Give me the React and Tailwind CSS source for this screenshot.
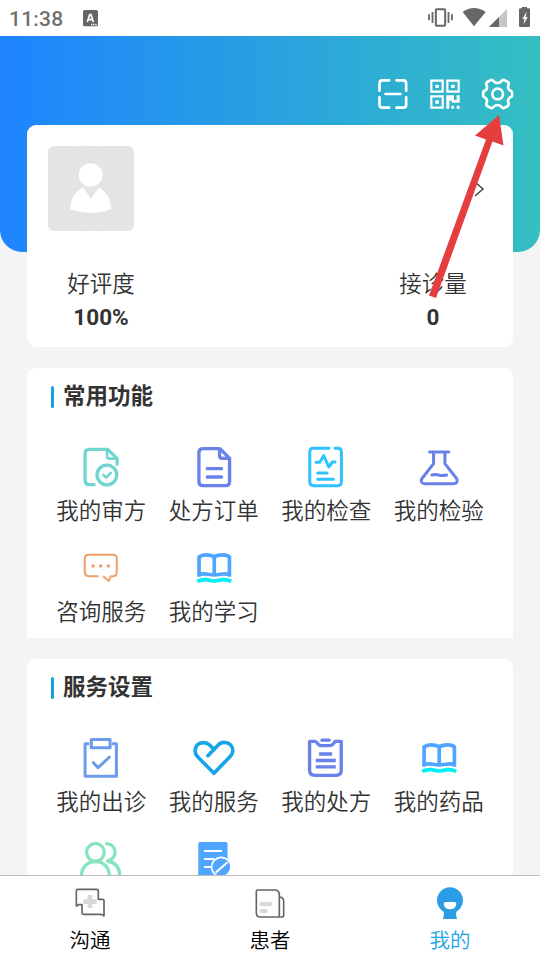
import React from 'react';

const stroke = { fill: 'none', strokeLinecap: 'round', strokeLinejoin: 'round' };

function Icon({ box, children, className = 'h-11 w-11' }) {
  return (
    <svg viewBox={box} className={`${className} block shrink-0`} aria-hidden="true">
      {children}
    </svg>
  );
}

const ReviewIcon = () => (
  <Icon box="117.75 225 132 132">
    <g {...stroke} stroke="#72d5d0" strokeWidth="10">
      <path d="M163 344H149Q136 344 136 331V251Q136 238 149 238H204L232 266V283" />
      <path d="M202 240V259Q202 266 209 266H230" strokeWidth="8" />
      <circle cx="201.500" cy="315" r="29.500" />
      <path d="M191 315L199 323L213 309" strokeWidth="8" />
    </g>
  </Icon>
);

const OrderIcon = () => (
  <Icon box="455.25 225 132 132">
    <g {...stroke} stroke="#6981e8" strokeWidth="10">
      <path d="M488 236H539L568 265V335Q568 347 556 347H488Q476 347 476 335V248Q476 236 488 236Z" />
      <path d="M538 238V257Q538 265 546 265H566M501 296H544M501 321H544" />
    </g>
  </Icon>
);

const ExamIcon = () => (
  <Icon box="102.75 45 132 132">
    <g {...stroke} stroke="#2fc2ff" strokeWidth="9">
      <path d="M178 55H131Q120 55 120 66V156Q120 167 131 167H204Q215 167 215 156V66Q215 55 204 55H196" />
      <path d="M139 97H150L162 77L177 111L188 96H196M144 129H172M144 148H191" />
    </g>
  </Icon>
);

const LabIcon = () => (
  <Icon box="440.25 45 132 132">
    <g {...stroke} stroke="#6981e8" strokeWidth="9">
      <path d="M478 66H536M490 68V101L454 147Q450 161 464 161H549Q564 161 560 147L524 101V68" />
      <path d="M485 135C500 129 509 141 529 135" />
    </g>
  </Icon>
);

const ChatIcon = () => (
  <Icon box="117.75 18 132 132">
    <g {...stroke} stroke="#eea069" strokeWidth="6">
      <path d="M174 109H149Q135 109 135 96V56Q135 44 147 44H219Q231 44 231 56V96Q231 109 219 109H213L207 123L192 110" />
    </g>
    <g fill="#eea069">
      <circle cx="160" cy="78" r="5.500" />
      <circle cx="183" cy="78" r="5.500" />
      <circle cx="206" cy="78" r="5.500" />
    </g>
  </Icon>
);

const BookIcon = () => (
  <Icon box="455.25 18 132 132">
    <g fill="none" strokeWidth="11">
      <path stroke="#4fa5ff" d="M476.500 110V51Q484 44.500 496 44.500Q512 44.500 522 50Q532 44.500 548 44.500Q562 44.500 567.500 51V110M522 50V106M473 105Q484 101 496 102Q508 104 522 105Q536 104 548 102Q560 101 571 105" />
      <path stroke="#00eff2" d="M471 124Q484 118 497 119Q508 121 522 123Q536 121 547 119Q560 118 573 124" />
    </g>
  </Icon>
);

const VisitIcon = () => (
  <Icon box="117.750 33 132 132">
    <g fill="none" stroke="#6c9bec" strokeWidth="9" strokeLinejoin="round">
      <path d="M148 56H136V154H230V56H217" />
      <path d="M154.500 43.500H211V68H154.500Z" />
      <path strokeLinecap="round" d="M161 113L175 128L209 96" />
    </g>
  </Icon>
);

const HeartIcon = () => (
  <Icon box="455.25 33 132 132">
    <path {...stroke} stroke="#18a5e8" strokeWidth="11" d="M503 92L533 61C544 49 563 50 572 61C580 71 579 84 571 93L521 145L472 95C462 85 462 70 471 60C481 50 498 51 508 60L517 69" />
  </Icon>
);

const PrescriptionIcon = () => (
  <Icon box="102.75 33 132 132">
    <g fill="none" stroke="#6981e8" strokeWidth="10" strokeLinejoin="round">
      <path d="M140 48H124Q119.500 48 119.500 53V136Q119.500 151 134 151H200Q214.500 151 214.500 136V53Q214.500 48 210 48H196Q191 62 177 62H156Q144 62 140 48Z" stroke="none" />
      <path d="M140 49H119.500V136Q119.500 151 134 151H200Q214.500 151 214.500 136V49H196Q190 62 177 62H156Q145 62 140 49" />
      <path strokeLinecap="round" d="M157 45.500H178" />
      <path d="M148 87H187M138 106.500H198M138 125.500H198" />
    </g>
  </Icon>
);

const PeopleIcon = () => (
  <Icon box="117.75 336 132 132">
    <g {...stroke} stroke="#88e4bd" strokeWidth="10">
      <circle cx="167" cy="382" r="26.500" />
      <path d="M125 454C125 426 143 410 167 410C191 410 209 426 209 454M201 356Q226 360 226 382Q225 402 203 408Q240 414 240 454" />
    </g>
  </Icon>
);

const BlockedIcon = () => (
  <Icon box="455.25 336 132 132">
    <rect x="474" y="351" width="88" height="115" rx="5" fill="#4fa5ff" />
    <path d="M494 378H543M494 402H520M494 426H512" fill="none" stroke="#fff" strokeWidth="6" strokeLinecap="round" />
    <circle cx="543" cy="426" r="29" fill="#4fa5ff" stroke="#fff" strokeWidth="5" />
    <path d="M526 443L562 412" stroke="#fff" strokeWidth="6" />
  </Icon>
);

const common = [
  ['我的审方', ReviewIcon],
  ['处方订单', OrderIcon],
  ['我的检查', ExamIcon],
  ['我的检验', LabIcon],
  ['咨询服务', ChatIcon],
  ['我的学习', BookIcon],
];

const services = [
  ['我的出诊', VisitIcon],
  ['我的服务', HeartIcon],
  ['我的处方', PrescriptionIcon],
  ['我的药品', BookIcon],
  ['', PeopleIcon],
  ['', BlockedIcon],
];

function Section({ title, items, className }) {
  return (
    <section className={`mx-[27px] shrink-0 bg-white ${className}`}>
      <div className="flex h-[57px] items-center gap-[9px] pl-6">
        <span className="mt-px h-[22px] w-[3px] rounded-full bg-[#18a0e5]" />
        <h2 className="mb-1.5 text-[22.5px] leading-[30px] font-bold">{title}</h2>
      </div>
      <div className="mx-[18px] mt-5 grid grid-cols-4">
        {items.map(([label, Glyph], i) => (
          <div key={i} className="flex h-[101px] flex-col items-center">
            <Glyph />
            <span className="mt-[5px] text-[22.5px] leading-[30px] whitespace-nowrap">{label}</span>
          </div>
        ))}
      </div>
    </section>
  );
}

function StatusBar() {
  return (
    <div className="flex h-9 shrink-0 items-center bg-white pl-[9px]">
      <span className="mt-0.5 font-[Roboto,sans-serif] text-[21px] leading-6 font-medium tracking-[0.2px] text-[#707070]">11:38</span>
      <svg viewBox="246 0 51 108" className="ml-[19px] h-9 w-[17px]">
        <rect x="249" y="30" width="45" height="49" rx="5" fill="#666" />
        <path d="M262 66L269 44H273L280 66M266 59H277" fill="none" stroke="#fff" strokeWidth="5" />
        <path d="M273 73.500H290" stroke="#fff" strokeWidth="4" strokeDasharray="4 2.500" />
      </svg>
      <svg viewBox="195 0 330 108" className="mr-[5px] ml-auto h-9 w-[110px]">
        <g fill="none" stroke="#666" strokeWidth="6">
          <rect x="227.500" y="28" width="28" height="49" rx="3" />
          <path d="M207 43V61M217.500 36V69M265.500 36V69M276 43V61" strokeWidth="5.500" />
        </g>
        <path d="M308 36Q342 12 377 36L342 79Z" fill="#666" />
        <path d="M387 81L441 27V81Z" fill="#c5c5c5" />
        <path d="M387 81L417 51V81Z" fill="#666" />
        <path d="M486 25V21H501V25H507Q510 25 510 29V77Q510 81 506 81H481Q477 81 477 77V29Q477 25 481 25Z" fill="#666" />
        <path d="M500 35L487 56H493L491 73L503 51H497Z" fill="#fff" />
      </svg>
    </div>
  );
}

function Header() {
  return (
    <header className="flex h-[216px] shrink-0 items-start justify-end gap-[16.5px] rounded-b-[22px] bg-linear-to-r/srgb from-[#1e84ff] to-[#34bfc1] pt-10 pr-[24.5px]">
      <Icon box="43.5 228 108 108" className="h-9 w-9">
        <g {...stroke} stroke="#fff" strokeWidth="8">
          <path d="M57 272V250Q57 241 66 241H86M108 241H128Q137 241 137 250V272M57 292V314Q57 323 66 323H86M108 323H128Q137 323 137 314V292M75 282H120" />
        </g>
      </Icon>
      <Icon box="201 228 108 108" className="h-9 w-9">
        <g fill="none" stroke="#fff" strokeWidth="6.500">
          <path d="M214 242H248V275H214ZM262 242H296V275H262ZM214 289H248V323H214Z" />
        </g>
        <path d="M226 254H237V264H226ZM273 254H284V264H273ZM226 301H237V311H226ZM259 286H282V300H290V286H299V308H275V302H268V326H259ZM274 317H282V326H274ZM290 317H299V326H290Z" fill="#fff" />
      </Icon>
      <Icon box="359.5 228 108 108" className="h-9 w-9">
        <g {...stroke} stroke="#fff" strokeWidth="8">
          <path d="M390 241Q395 238 399 242Q404 249 412 249Q420 249 425 242Q429 238 434 241L443 246Q447 249 445 255Q442 263 446 268Q449 272 453 273Q456 275 456 282Q456 290 453 291Q448 292 445 297Q442 303 445 309Q447 315 443 318L434 323Q429 326 425 322Q420 315 412 315Q404 315 399 322Q395 326 390 323L381 318Q377 315 379 309Q382 303 379 297Q376 292 371 291Q369 290 369 282Q369 275 371 273Q376 272 379 268Q382 263 379 255Q377 249 381 246Z" />
          <circle cx="412.500" cy="282" r="16" />
        </g>
      </Icon>
    </header>
  );
}

function Stat({ label, value }) {
  return (
    <div className="flex w-[148px] flex-col items-center">
      <span className="text-[22.5px] leading-[34px]">{label}</span>
      <span className="mt-px font-[Roboto,sans-serif] text-[22.5px] leading-[34px] font-bold">{value}</span>
    </div>
  );
}

function ProfileCard() {
  return (
    <section className="mx-[27px] -mt-[127px] h-[222px] shrink-0 rounded-[9px] bg-white">
      <div className="flex items-center pt-[21px] pr-[28px] pl-[21px]">
        <svg viewBox="84 78 258 255" className="h-[85px] w-[86px] rounded-md bg-[#e4e4e4]">
          <circle cx="213" cy="205" r="116" fill="none" stroke="#ececec" strokeWidth="1.500" />
          <circle cx="212" cy="165" r="35.500" fill="#fff" />
          <path d="M190 202L212 238L237 202Q272 221 274 268Q213 290 150 268Q152 221 190 202Z" fill="#fff" />
        </svg>
        <svg viewBox="0 0 12 18" className="ml-auto h-[18px] w-3">
          <path d="M2 2L10 9L2 16" fill="none" stroke="#444" strokeWidth="1.500" />
        </svg>
      </div>
      <div className="mt-[34px] flex justify-between pr-[6px]">
        <Stat label="好评度" value="100%" />
        <Stat label="接诊量" value="0" />
      </div>
    </section>
  );
}

function Tab({ label, active, children }) {
  return (
    <div className={`flex flex-1 flex-col items-center pt-[9px] ${active ? 'text-[#18a5e8]' : 'text-black'}`}>
      {children}
      <span className="mt-[3px] text-[20.5px] leading-[30px]">{label}</span>
    </div>
  );
}

function TabBar() {
  return (
    <nav className="flex h-[85px] shrink-0 border-t border-[#bdbdbd] bg-white">
      <Tab label="沟通">
        <Icon box="96 45 108 108" className="h-9 w-9">
          <path d="M143 75H157V88H170V102H157V114H143V102H130V88H143Z" fill="#d8d8d8" />
          <path {...stroke} stroke="#666" strokeWidth="5" d="M109 108V62Q109 58 113 58H171Q175 58 175 62V88H188Q192 88 192 92V138L184 133H130Q126 133 126 129V104H116Z" />
        </Icon>
      </Tab>
      <Tab label="患者">
        <Icon box="636 45 108 108" className="h-9 w-9">
          <path d="M664 102H692M664 123H677" stroke="#d8d8d8" strokeWidth="12" strokeLinecap="round" />
          <path {...stroke} stroke="#666" strokeWidth="5" d="M653 60H704Q718 60 718 74V141H661Q649 141 649 128V64Q649 60 653 60ZM720 81Q731 83 731 94V136Q731 141 726 141H718" />
        </Icon>
      </Tab>
      <Tab label="我的" active>
        <Icon box="96 45 108 108" className="h-9 w-9">
          <path d="M131 125A39 39 0 1 1 169 125Q167 135 171 147H129Q133 135 131 125Z" fill="#2b9de5" />
          <path d="M131 101Q131 96 138 96H162Q169 96 169 101Q167 118 150 118Q133 118 131 101Z" fill="#fff" />
        </Icon>
      </Tab>
    </nav>
  );
}

export default function App() {
  return (
    <div className="relative flex h-[960px] w-[540px] flex-col overflow-hidden bg-[#f4f4f4] font-['Noto_Sans_CJK_SC',sans-serif] font-[350] text-[#333]">
      <StatusBar />
      <main className="flex min-h-0 flex-1 flex-col overflow-hidden">
        <Header />
        <ProfileCard />
        <Section title="常用功能" items={common} className="mt-[21px] h-[270px] rounded-t-[9px]" />
        <Section title="服务设置" items={services} className="mt-[21px] h-[320px] rounded-t-[9px]" />
      </main>
      <TabBar />
      {/* Guide arrow pointing at the settings button */}
      <svg viewBox="0 0 80 190" className="pointer-events-none absolute top-[112px] left-[426px] h-[190px] w-20">
        <path d="M73 3L77.500 33.500L66.500 29.500L10 186L3 183.500L60 27.500L49 23.500Z" fill="#e53e3e" />
      </svg>
    </div>
  );
}
